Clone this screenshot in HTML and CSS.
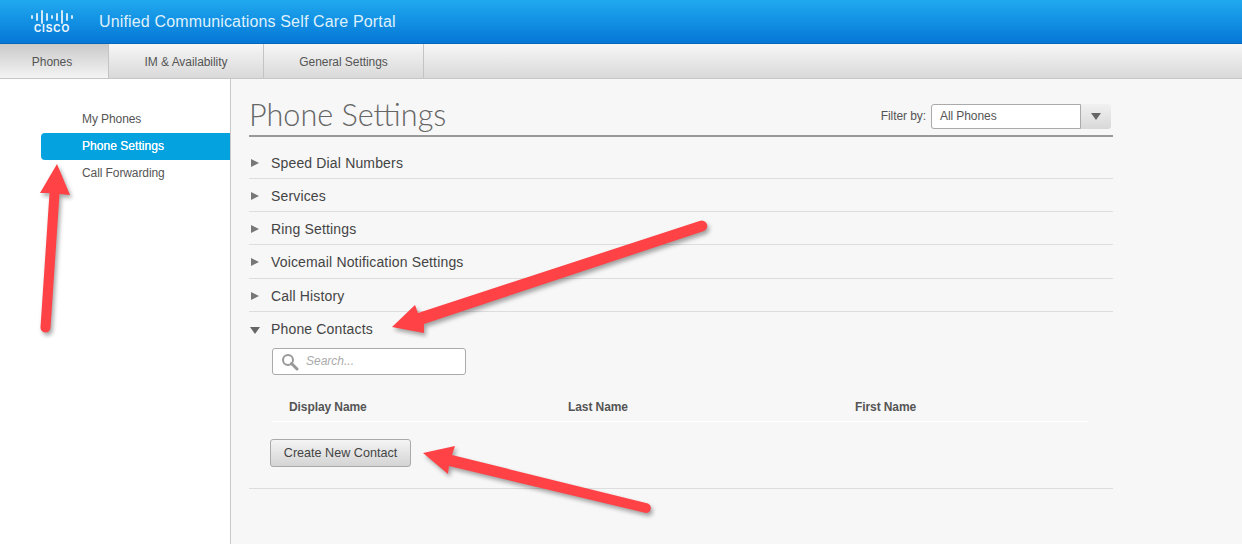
FILE: index.html
```html
<!DOCTYPE html>
<html lang="en">
<head>
<meta charset="utf-8">
<title>Unified Communications Self Care Portal</title>
<link rel="stylesheet" href="styles.css">
</head>
<body>
<div class="app">
  <header class="topbar">
    <svg class="logo" viewBox="0 0 44 24" width="44" height="24" aria-label="Cisco logo">
      <g class="bars">
        <path d="M2 6v2M7 4v6M12 1v12M17 4v6M22 6v2M27 4v6M32 1v12M37 4v6M42 6v2"/>
      </g>
    </svg>
    <span class="logo-word">CISCO</span>
    <h1 class="portal-title">Unified Communications Self Care Portal</h1>
  </header>
  <nav class="tabs">
    <a class="tab tab-active">Phones</a>
    <a class="tab tab-im">IM &amp; Availability</a>
    <a class="tab tab-gen">General Settings</a>
  </nav>
  <div class="body-row">
    <aside class="side">
      <a class="side-item">My Phones</a>
      <a class="side-item side-active">Phone Settings</a>
      <a class="side-item">Call Forwarding</a>
    </aside>
    <main class="main">
      <div class="title-row">
        <h2 class="page-title">Phone Settings</h2>
        <div class="filter">
          <span class="filter-label">Filter by:</span>
          <div class="select">
            <span class="select-value">All Phones</span>
            <span class="select-btn"><i class="tri-down"></i></span>
          </div>
        </div>
      </div>
      <section class="acc acc-first"><i class="tri-right"></i><span>Speed Dial Numbers</span></section>
      <section class="acc"><i class="tri-right"></i><span>Services</span></section>
      <section class="acc"><i class="tri-right"></i><span>Ring Settings</span></section>
      <section class="acc acc-tall"><i class="tri-right"></i><span>Voicemail Notification Settings</span></section>
      <section class="acc"><i class="tri-right"></i><span>Call History</span></section>
      <section class="open">
        <div class="open-head"><i class="tri-down"></i><span>Phone Contacts</span></div>
        <div class="search">
          <svg width="18" height="18" viewBox="0 0 18 18" class="search-icon"><circle cx="7" cy="7" r="5" fill="none" stroke="#999" stroke-width="2"/><path d="M10.500 10.500L16 16" stroke="#999" stroke-width="3" stroke-linecap="round"/></svg>
          <span class="search-text">Search...</span>
        </div>
        <div class="cols">
          <span class="col col-a">Display Name</span>
          <span class="col col-b">Last Name</span>
          <span class="col">First Name</span>
        </div>
        <button class="create">Create New Contact</button>
      </section>
    </main>
  </div>
</div>
<svg class="arrows" width="1242" height="544" viewBox="0 0 1242 544">
  <g class="arrow-set">
    <path d="M57 164L70 195L59.500 194L50.500 328A5 5 0 0 1 40.500 327L49.500 193L40 193Z"/>
    <path d="M392 327L415 305L418 313L699.500 221A5 5 0 0 1 704 231L424 324L424 333Z"/>
    <path d="M423 453L455 446L452 455L648 503.500A5 5 0 0 1 646 513L449 466L448 474Z"/>
  </g>
</svg>
</body>
</html>
```
FILE: styles.css
```css
* { box-sizing: border-box; }
html, body { margin: 0; padding: 0; height: 544px; overflow: hidden; background: #fff; }
body { font-family: "Liberation Sans", Arial, sans-serif; color: #444; position: relative; }
.app { display: flex; flex-direction: column; height: 544px; }

.topbar { height: 44px; background: linear-gradient(#20a9ef, #0577d6); display: flex; align-items: center; padding-left: 99px; position: relative; border-bottom: 1px solid #0567b8; }
.logo { position: absolute; left: 30px; top: 10px; }
.bars path { stroke: #e4f3fc; stroke-width: 1.800; fill: none; stroke-linecap: round; }
.logo-word { position: absolute; left: 34px; top: 23px; font-size: 10px; font-weight: 700; letter-spacing: 0.900px; color: #eef8fe; line-height: 12px; }
.portal-title { margin: 0; font-size: 16px; font-weight: 400; letter-spacing: 0.150px; color: #dff1fc; white-space: nowrap; }

.tabs { height: 35px; display: flex; background: linear-gradient(#f6f6f6, #d9d9d9); border-bottom: 1px solid #c6c6c6; }
.tab { display: flex; align-items: center; justify-content: center; font-size: 12px; letter-spacing: -0.060px; color: #555; border-right: 1px solid #c4c4c4; height: 34px; padding-top: 2px; }
.tab-active { width: 109px; background: linear-gradient(#c9c9c9, #f4f4f4); padding-right: 4px; }
.tab-im { width: 155px; }
.tab-gen { width: 160px; }

.body-row { flex: 1; display: flex; min-height: 0; }
.side { width: 231px; background: #fff; border-right: 1px solid #c9c9c9; padding: 27px 0 0 41px; display: flex; flex-direction: column; }
.side-item { height: 27px; padding-left: 41px; font-size: 12px; letter-spacing: -0.090px; line-height: 27px; color: #555; }
.side-active { background: #04a3e0; color: #fff; letter-spacing: 0.040px; text-shadow: 0 0 .6px #fff; border-radius: 4px 0 0 4px; }

.main { width: 1011px; background: #f7f7f7; padding: 0 129px 0 18px; display: flex; flex-direction: column; }
.title-row { height: 58px; border-bottom: 2px solid #999; display: flex; justify-content: space-between; padding-top: 16px; }
.page-title { margin: 0; font-family: Lato, sans-serif; font-weight: 300; font-size: 30.600px; line-height: 40px; color: #666; }
.filter { display: flex; align-items: flex-start; padding-top: 9px; margin-right: 2px; }
.filter-label { font-size: 12px; letter-spacing: -0.080px; line-height: 24px; color: #555; margin-right: 5px; }
.select { width: 180px; height: 25px; display: flex; border-radius: 3px; background: linear-gradient(#f1f1f1, #d8d8d8); }
.select-value { width: 150px; background: #fff; border: 1px solid #aaa; border-radius: 3px 0 0 3px; font-size: 12px; letter-spacing: -0.080px; line-height: 23px; padding-left: 8px; color: #555; }
.select-btn { flex: 1; display: flex; align-items: center; justify-content: center; }

.tri-right { width: 0; height: 0; border-left: 8px solid #777; border-top: 4.500px solid transparent; border-bottom: 4.500px solid transparent; margin-right: 12px; flex: none; }
.tri-down { display: block; width: 0; height: 0; border-top: 7px solid #666; border-left: 5px solid transparent; border-right: 5px solid transparent; flex: none; }

.acc { height: 33px; display: flex; align-items: center; border-bottom: 1px solid #ddd; font-size: 14px; color: #444; padding: 2px 0 0 2px; letter-spacing: 0.160px; }
.acc-first { margin-top: 9px; }
.acc-tall { height: 34px; padding-top: 1px; padding-bottom: 1px; }
.open { height: 177px; border-bottom: 1px solid #ddd; display: flex; flex-direction: column; align-items: flex-start; }
.open-head { height: 34px; display: flex; align-items: center; font-size: 14px; color: #444; padding-left: 1px; letter-spacing: 0.160px; }
.open-head .tri-down { margin-right: 11px; margin-top: 2px; }
.search { margin: 2px 0 0 23px; width: 194px; height: 27px; background: #fff; border: 1px solid #aaa; border-radius: 3px; display: flex; align-items: center; padding-left: 8px; }
.search-icon { margin-right: 7px; }
.search-text { font-size: 12px; font-style: italic; color: #aaa; margin-top: -2px; }
.cols { margin: 19px 0 0 22px; width: 818px; height: 28px; border-bottom: 1px solid #fff; display: flex; padding-left: 18px; font-size: 12px; font-weight: 700; letter-spacing: -0.090px; color: #555; line-height: 26px; }
.col-a { width: 279px; }
.col-b { width: 287px; }
.create { margin: 17px 0 0 21px; width: 141px; height: 28px; border: 1px solid #aaa; border-radius: 3px; background: linear-gradient(#f4f4f4, #d4d4d4); font-family: inherit; font-size: 12.600px; color: #444; padding: 0; }

.arrows { position: absolute; left: 0; top: 0; pointer-events: none; }
.arrow-set { fill: #ff4246; filter: drop-shadow(2px 3px 2px rgba(0,0,0,.35)); }
```
